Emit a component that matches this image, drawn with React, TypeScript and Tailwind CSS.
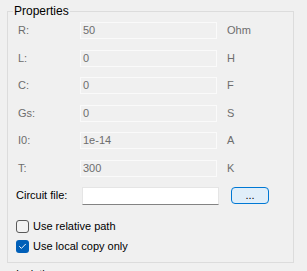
import { Check } from "lucide-react";

const rows = [
  { label: "R:", value: "50", unit: "Ohm" },
  { label: "L:", value: "0", unit: "H" },
  { label: "C:", value: "0", unit: "F" },
  { label: "Gs:", value: "0", unit: "S" },
  { label: "I0:", value: "1e-14", unit: "A" },
  { label: "T:", value: "300", unit: "K" },
];

function CheckRow({ checked, label }: { checked: boolean; label: string }) {
  return (
    <div className="flex items-center h-[13px]">
      {checked ? (
        <div className="w-[13px] h-[13px] rounded-[3px] bg-[#005fb8] flex items-center justify-center">
          <Check size={9} strokeWidth={2.5} color="#ffffff" />
        </div>
      ) : (
        <div className="w-[13px] h-[13px] rounded-[3px] border border-[#5a5a5a] bg-[#f3f3f3]" />
      )}
      <span className="ml-[4px] text-black">{label}</span>
    </div>
  );
}

export default function App() {
  return (
    <div
      className="w-[307px] h-[271px] overflow-hidden bg-[#f0f0f0] text-[11px] leading-[13px]"
      style={{ fontFamily: '"Liberation Sans", Arial, sans-serif' }}
    >
      <fieldset className="ml-[7px] mt-[4px] w-[287px] h-[259px] border border-[#dcdcdc] pl-[8px] pr-[10px] pt-[4px]">
        <legend className="ml-[-3px] px-[1px] text-[12px] leading-[14px] text-black">Properties</legend>
        <div className="flex flex-col gap-[10.5px]">
          {rows.map((r) => (
            <div key={r.label} className="flex items-center h-[17px]">
              <span className="w-[64px] pl-[2px] text-[#6d6d6d]">{r.label}</span>
              <div className="w-[137px] h-[17px] border border-[#fafafa] flex items-center pl-[2px] text-[#6d6d6d]">
                {r.value}
              </div>
              <span className="ml-[10px] text-[#6d6d6d]">{r.unit}</span>
            </div>
          ))}
        </div>
        <div className="flex items-center mt-[10px] h-[18px]">
          <span className="w-[66px] text-black">Circuit file:</span>
          <div className="w-[137px] h-[18px] bg-white border border-[#e5e5e5] border-b-[#838383]" />
          <button className="ml-[12px] w-[38px] h-[17px] rounded-[4px] border border-[#0078d4] bg-[#e0eef9] text-black text-[11px] leading-[10px] flex items-center justify-center pb-[2px]">
            ...
          </button>
        </div>
        <div className="flex flex-col gap-[7px] mt-[15px]">
          <CheckRow checked={false} label="Use relative path" />
          <CheckRow checked={true} label="Use local copy only" />
        </div>
      </fieldset>
      <div className="mt-[5px] ml-[16px] text-black">Isolation</div>
    </div>
  );
}
